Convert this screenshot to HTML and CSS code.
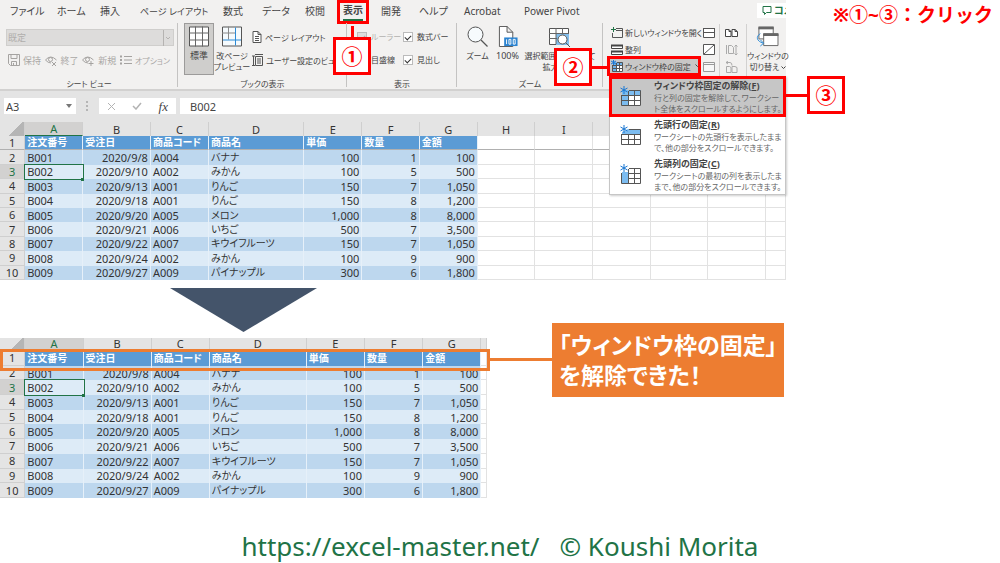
FILE: index.html
```html
<!DOCTYPE html>
<html lang="ja">
<head>
<meta charset="utf-8">
<title>ウィンドウ枠の固定を解除</title>
<link rel="stylesheet" href="styles.css">
</head>
<body>
<main class="slide">
  <div class="top">
    <section class="app">
      <nav class="tabs">
        <button class="tab">ファイル</button>
        <button class="tab">ホーム</button>
        <button class="tab">挿入</button>
        <button class="tab tab-long">ページ レイアウト</button>
        <button class="tab">数式</button>
        <button class="tab">データ</button>
        <button class="tab">校閲</button>
        <div class="tab-wrap">
          <button class="tab tab-active">表示</button>
          <span class="frame frame-tab"></span>
          <span class="badge badge-1">①</span>
        </div>
        <button class="tab">開発</button>
        <button class="tab">ヘルプ</button>
        <button class="tab">Acrobat</button>
        <button class="tab">Power Pivot</button>
        <button class="comment"><svg width="10" height="9" viewBox="0 0 10 9"><path d="M1 .5h8v6H4.500L2.500 8.500V6.500H1z" fill="none" stroke="#217346"/></svg>コメント</button>
      </nav>

      <div class="ribbon">
        <div class="group sheet-view">
          <div class="body">
            <div class="combo"><select aria-label="シート ビュー" disabled><option>既定</option></select>
              <svg class="combo-arrow" width="10" height="16" viewBox="0 0 10 16"><path d="M.5 0v16M3 7l2 2 2-2" fill="none" stroke="#b5b3b1"/></svg></div>
            <div class="sheet-actions">
              <button class="cmd" disabled><svg width="12" height="12" viewBox="0 0 12 12" fill="none" stroke="#a5a3a1"><path d="M.5.5h11v11H2.500L.5 9.500zM3 .5v4h6v-4M3.500 11.500v-4h5v4M5.500 9v2"/></svg>保持</button>
              <button class="cmd" disabled><svg width="13" height="11" viewBox="0 0 13 11" fill="none" stroke="#a5a3a1"><path d="M.5 5Q5.500-1 11.500 5M.5 5Q3 8 6 8M7 7l4 4M11 7l-4 4"/><circle cx="5.500" cy="4.500" r="2"/></svg>終了</button>
              <button class="cmd" disabled><svg width="13" height="11" viewBox="0 0 13 11" fill="none" stroke="#a5a3a1"><path d="M.5 5Q5.500-1 11.500 5M.5 5Q3 8 6 8M9 6v5M6.500 8.500h5"/><circle cx="5.500" cy="4.500" r="2"/></svg>新規</button>
              <button class="cmd cmd-kana" disabled><svg width="12" height="10" viewBox="0 0 12 10" fill="none" stroke="#a5a3a1"><path d="M0 1.500h2M0 5h2M0 8.500h2" stroke-width="2"/><path d="M4 1.500h8M4 5h8M4 8.500h8"/></svg>オプション</button>
            </div>
          </div>
          <div class="caption">シート ビュー</div>
        </div>

        <div class="group book-view">
          <div class="body">
            <button class="big big-on"><svg width="20" height="20" viewBox="0 0 20 20"><path d="M.5.5h19v19H.5z" fill="#fff" stroke="#555"/><path d="M6.500 0v20M13.500 0v20M0 6.500h20M0 13.500h20" stroke="#666"/></svg><span class="wide">標準</span></button>
            <button class="big"><svg width="20" height="20" viewBox="0 0 20 20"><path d="M.5.5h19v19H.5z" fill="#f5fafd" stroke="#555"/><path d="M6.500 0v13M0 6.500h13" stroke="#888"/><path d="M13.500 1v18M1 13.500h18" stroke="#2b8ad6"/></svg><span>改ページ<br>プレビュー</span></button>
            <div class="stack">
              <button class="cmd"><svg width="10" height="12" viewBox="0 0 10 12"><path d="M1 .5h5l3 3v8H1zM6 .5v3h3M3 5.500h4M3 7.500h4M3 9.500h4" fill="#fff" stroke="#555"/></svg>ページ レイアウト</button>
              <button class="cmd"><svg width="11" height="12" viewBox="0 0 11 12"><path d="M3.500 2.500h7v9h-7zM3 .5h8M1.500 2v10M0 2h3M0 11.500h3M5 5h4M5 7h4M5 9h4" fill="none" stroke="#555"/></svg>ユーザー設定のビュー</button>
            </div>
          </div>
          <div class="caption">ブックの表示</div>
        </div>

        <div class="group show">
          <div class="body checks">
            <label class="check off"><input type="checkbox" checked disabled>ルーラー</label>
            <label class="check"><input type="checkbox" checked>数式バー</label>
            <label class="check"><input type="checkbox" checked>目盛線</label>
            <label class="check"><input type="checkbox" checked>見出し</label>
          </div>
          <div class="caption">表示</div>
        </div>

        <div class="group zoom">
          <div class="body">
            <button class="big"><svg width="21" height="21" viewBox="0 0 21 21"><circle cx="8.500" cy="8.500" r="7.500" fill="#f7fbfd" stroke="#555"/><path d="M14 14l6.500 6.500" stroke="#555" stroke-width="1.300"/></svg><span>ズーム</span></button>
            <button class="big"><svg width="20" height="22" viewBox="0 0 20 22"><path d="M1 .5h8l6 6v15H1zM9 .5v6h6" fill="#fff" stroke="#555"/><path d="M6 12h14v9H6z" fill="#2b83d0"/><path d="M8.500 14v5M11 14h2v5h-2zM15.500 14h2v5h-2z" stroke="#fff" fill="none"/></svg><span class="wide">100%</span></button>
            <button class="big"><svg width="22" height="21" viewBox="0 0 22 21"><path d="M.5 2.500h19v16H.5z" fill="#fff" stroke="#555"/><path d="M7 7h13v12H7z" fill="#83beec"/><path d="M7 2v16M13.500 2v6M0 7.500h20M0 12.500h8" stroke="#666"/><circle cx="13.500" cy="13.500" r="4.500" fill="#fff" stroke="#555"/><path d="M17 17l4 4" stroke="#555"/></svg><span>選択範囲に合わせて<br>拡大/縮小</span></button>
          </div>
          <div class="caption">ズーム</div>
        </div>

        <div class="group window">
          <div class="body">
            <div class="win-list">
              <button class="cmd"><svg width="12" height="12" viewBox="0 0 12 12"><path d="M5 1.500h6.500v9H1.500V6M5 3.500h6.500" fill="none" stroke="#555"/><path d="M2.500 0v5M0 2.500h5" stroke="#217346"/></svg>新しいウィンドウを開く</button>
              <button class="cmd"><svg width="12" height="12" viewBox="0 0 12 12"><path d="M.5 1.500h11v3H.5zM.5 7.500h11v3H.5z" fill="#fff" stroke="#444"/><path d="M0 1.500h12M0 7.500h12" stroke="#444" stroke-width="2"/></svg>整列</button>
              <div class="freeze">
                <button class="cmd cmd-on"><svg width="12" height="12" viewBox="0 0 12 12"><path d="M2 2h10v10H2z" fill="#fff"/><path d="M2 2h10v3H5v7H2z" fill="#6fb3ea"/><path d="M1.500 5v6.500h10v-9H6M5.500 3v9M8.500 3v9M2 5.500h10M2 8.500h10" stroke="#555" fill="none"/><path d="M2.500 0v5M0 1l5 3M0 4l5-3" stroke="#1976d2"/></svg>ウィンドウ枠の固定<svg class="chev" width="5" height="4" viewBox="0 0 5 4"><path d="M.5.5l2 2 2-2" fill="none" stroke="#444"/></svg></button>
                <span class="frame"></span>
                <span class="badge badge-2">②</span>
                <div class="menu" role="menu">
                  <button class="item item-on" role="menuitem">
                    <svg width="22" height="22" viewBox="0 0 22 22"><path d="M2 4h19v16H2z" fill="#fff"/><path d="M2 4h19v5H8v11H2z" fill="#7cbcf0"/><path d="M1.500 9v10.500h19v-15H9M8.500 5v15M14.500 5v15M2 9.500h19M2 14.500h19" fill="none" stroke="#555"/><path d="M4 0v8M.5 2l7 4M.5 6l7-4" stroke="#1976d2"/></svg>
                    <span class="txt"><b>ウィンドウ枠固定の解除(<u>F</u>)</b><span>行と列の固定を解除して、ワークシー<br>ト全体をスクロールするようにします。</span></span>
                    <span class="frame"></span>
                    <span class="badge badge-3">③</span>
                  </button>
                  <button class="item" role="menuitem">
                    <svg width="22" height="22" viewBox="0 0 22 22"><path d="M2 4h19v16H2z" fill="#fff"/><path d="M8 4h13v5H2V7z" fill="#7cbcf0"/><path d="M1.500 9v10.500h19v-15H9M8.500 9v11M14.500 9v11M2 9.500h19M2 14.500h19" fill="none" stroke="#555"/><path d="M4 0v8M.5 2l7 4M.5 6l7-4" stroke="#1976d2"/></svg>
                    <span class="txt"><b>先頭行の固定(<u>R</u>)</b><span>ワークシートの先頭行を表示したまま<br>で、他の部分をスクロールできます。</span></span>
                  </button>
                  <button class="item" role="menuitem">
                    <svg width="22" height="22" viewBox="0 0 22 22"><path d="M2 4h19v16H2z" fill="#fff"/><path d="M2 8h6v12H2z" fill="#7cbcf0"/><path d="M1.500 9v10.500h19v-15H9M8.500 5v15M14.500 5v15M8 9.500h13M8 14.500h13" fill="none" stroke="#555"/><path d="M4 0v8M.5 2l7 4M.5 6l7-4" stroke="#1976d2"/></svg>
                    <span class="txt"><b>先頭列の固定(<u>C</u>)</b><span>ワークシートの最初の列を表示したま<br>まで、他の部分をスクロールできます。</span></span>
                  </button>
                </div>
              </div>
            </div>
            <div class="icons">
              <button class="ic" aria-label="分割"><svg width="12" height="12" viewBox="0 0 12 12"><path d="M.5 1.500h11v9H.5zM0 5.500h12" fill="#fff" stroke="#555"/><path d="M0 1.500h12" stroke="#555"/></svg></button>
              <button class="ic" aria-label="表示しない"><svg width="12" height="12" viewBox="0 0 12 12"><path d="M.5.5h11v10H.5zM1 10L11 1" fill="#fff" stroke="#555"/></svg></button>
              <button class="ic" aria-label="再表示"><svg width="12" height="12" viewBox="0 0 12 12"><path d="M.5 1.500h11v9H.5zM0 3.500h12" fill="#f7f7f7" stroke="#999"/></svg></button>
            </div>
            <div class="icons icons-2">
              <button class="ic" aria-label="並べて比較"><svg width="13" height="12" viewBox="0 0 13 12"><path d="M.5 2.500H4l2 2v5H.5zM7 2.500h3l2.500 2v5H7zM4 2.500v2h2M10 2.500v2h2" fill="#fff" stroke="#444"/></svg></button>
              <button class="ic" aria-label="同時にスクロール"><svg width="13" height="12" viewBox="0 0 13 12"><path d="M1.500 1v9M3.500 1.500h3l2 2v6h-5zM11 1v10M9.500 2.500L11 1l1.500 1.500M9.500 9.500L11 11l1.500-1.500" fill="none" stroke="#aaa"/></svg></button>
              <button class="ic" aria-label="位置を元に戻す"><svg width="13" height="12" viewBox="0 0 13 12"><path d="M1.500 5.500h3l1.500 1v5H1.500zM7 5.500h3l2 1v5H7zM1 1.500h4q2 0 2 3M3 0L1 1.500 3 3" fill="none" stroke="#aaa"/></svg></button>
            </div>
            <button class="big switch"><svg width="23" height="22" viewBox="0 0 23 22"><path d="M2.500 1.500h15v12h-15z" fill="#fff" stroke="#666"/><path d="M2 2h16" stroke="#666" stroke-width="3"/><path d="M7.500 8.500h15v12h-15z" fill="#fff" stroke="#666"/><path d="M7 9h16" stroke="#666" stroke-width="3"/><path d="M4 8C-1 11 0 16 7 18M4 14.500L7.500 18 4 21" fill="none" stroke="#2b8ad6"/></svg><span>ウィンドウの<br>切り替え <svg class="chev" width="5" height="4" viewBox="0 0 5 4"><path d="M.5.5l2 2 2-2" fill="none" stroke="#444"/></svg></span></button>
          </div>
        </div>
      </div>

      <div class="formula-bar">
        <div class="name-box"><input aria-label="名前ボックス" value="A3"><svg width="6" height="4" viewBox="0 0 6 4"><path d="M0 0h6L3 4z" fill="#777"/></svg></div>
        <svg class="dots" width="2" height="10" viewBox="0 0 2 10"><path d="M0 0h2v2H0zM0 4h2v2H0zM0 8h2v2H0z" fill="#b5b5b5"/></svg>
        <div class="fx">
          <svg width="9" height="9" viewBox="0 0 9 9"><path d="M1 1l7 7M8 1L1 8" stroke="#b3b3b3"/></svg>
          <svg width="10" height="8" viewBox="0 0 10 8"><path d="M1 4l3 3 5-6" fill="none" stroke="#b3b3b3" stroke-width="1.500"/></svg>
          <i>fx</i>
        </div>
        <input class="formula" aria-label="数式バー" value="B002">
      </div>

      <table class="sheet sheet-top">
        <colgroup><col class="c-n"><col class="c-a"><col class="c-b"><col class="c-c"><col class="c-d"><col class="c-a"><col class="c-f"><col class="c-a"><col class="c-f"><col class="c-a"><col class="c-f"><col class="c-f"><col class="c-a"><col></colgroup>
        <thead><tr><th class="corner"></th><th class="sel">A</th><th>B</th><th>C</th><th>D</th><th>E</th><th>F</th><th>G</th><th>H</th><th>I</th><th></th><th></th><th></th><th></th></tr></thead>
        <tbody>
        <tr class="head"><th>1</th><td>注文番号</td><td>受注日</td><td>商品コード</td><td>商品名</td><td>単価</td><td>数量</td><td>金額</td><td></td><td></td><td></td><td></td><td></td><td></td></tr>
        <tr><th>2</th><td>B001</td><td>2020/9/8</td><td>A004</td><td>バナナ</td><td>100</td><td>1</td><td>100</td><td></td><td></td><td></td><td></td><td></td><td></td></tr>
        <tr><th class="sel">3</th><td class="cur">B002</td><td>2020/9/10</td><td>A002</td><td>みかん</td><td>100</td><td>5</td><td>500</td><td></td><td></td><td></td><td></td><td></td><td></td></tr>
        <tr><th>4</th><td>B003</td><td>2020/9/13</td><td>A001</td><td>りんご</td><td>150</td><td>7</td><td>1,050</td><td></td><td></td><td></td><td></td><td></td><td></td></tr>
        <tr><th>5</th><td>B004</td><td>2020/9/18</td><td>A001</td><td>りんご</td><td>150</td><td>8</td><td>1,200</td><td></td><td></td><td></td><td></td><td></td><td></td></tr>
        <tr><th>6</th><td>B005</td><td>2020/9/20</td><td>A005</td><td>メロン</td><td>1,000</td><td>8</td><td>8,000</td><td></td><td></td><td></td><td></td><td></td><td></td></tr>
        <tr><th>7</th><td>B006</td><td>2020/9/21</td><td>A006</td><td>いちご</td><td>500</td><td>7</td><td>3,500</td><td></td><td></td><td></td><td></td><td></td><td></td></tr>
        <tr><th>8</th><td>B007</td><td>2020/9/22</td><td>A007</td><td>キウイフルーツ</td><td>150</td><td>7</td><td>1,050</td><td></td><td></td><td></td><td></td><td></td><td></td></tr>
        <tr><th>9</th><td>B008</td><td>2020/9/24</td><td>A002</td><td>みかん</td><td>100</td><td>9</td><td>900</td><td></td><td></td><td></td><td></td><td></td><td></td></tr>
        <tr><th>10</th><td>B009</td><td>2020/9/27</td><td>A009</td><td>パイナップル</td><td>300</td><td>6</td><td>1,800</td><td></td><td></td><td></td><td></td><td></td><td></td></tr>
        </tbody>
      </table>
    </section>
    <p class="note">※①~③：クリック</p>
  </div>

  <div class="arrow"></div>

  <div class="result">
    <div class="result-sheet">
      <table class="sheet sheet-bottom">
        <colgroup><col class="r-n"><col class="r-a"><col class="r-b"><col class="r-a"><col class="r-d"><col class="r-a"><col class="r-a"><col class="r-a"><col></colgroup>
        <thead><tr><th class="corner"></th><th class="sel">A</th><th>B</th><th>C</th><th>D</th><th>E</th><th>F</th><th>G</th><th></th></tr></thead>
        <tbody>
        <tr class="head"><th>1</th><td>注文番号</td><td>受注日</td><td>商品コード</td><td>商品名</td><td>単価</td><td>数量</td><td>金額</td><td></td></tr>
        <tr><th>2</th><td>B001</td><td>2020/9/8</td><td>A004</td><td>バナナ</td><td>100</td><td>1</td><td>100</td><td></td></tr>
        <tr><th class="sel">3</th><td class="cur">B002</td><td>2020/9/10</td><td>A002</td><td>みかん</td><td>100</td><td>5</td><td>500</td><td></td></tr>
        <tr><th>4</th><td>B003</td><td>2020/9/13</td><td>A001</td><td>りんご</td><td>150</td><td>7</td><td>1,050</td><td></td></tr>
        <tr><th>5</th><td>B004</td><td>2020/9/18</td><td>A001</td><td>りんご</td><td>150</td><td>8</td><td>1,200</td><td></td></tr>
        <tr><th>6</th><td>B005</td><td>2020/9/20</td><td>A005</td><td>メロン</td><td>1,000</td><td>8</td><td>8,000</td><td></td></tr>
        <tr><th>7</th><td>B006</td><td>2020/9/21</td><td>A006</td><td>いちご</td><td>500</td><td>7</td><td>3,500</td><td></td></tr>
        <tr><th>8</th><td>B007</td><td>2020/9/22</td><td>A007</td><td>キウイフルーツ</td><td>150</td><td>7</td><td>1,050</td><td></td></tr>
        <tr><th>9</th><td>B008</td><td>2020/9/24</td><td>A002</td><td>みかん</td><td>100</td><td>9</td><td>900</td><td></td></tr>
        <tr><th>10</th><td>B009</td><td>2020/9/27</td><td>A009</td><td>パイナップル</td><td>300</td><td>6</td><td>1,800</td><td></td></tr>
        </tbody>
      </table>
      <span class="row-frame"></span>
    </div>
    <div class="link-line"></div>
    <p class="callout">「ウィンドウ枠の固定」<br>を解除できた！</p>
  </div>

  <footer class="credit"><a href="https://excel-master.net/">https://excel-master.net/</a><span>© Koushi Morita</span></footer>
</main>
</body>
</html>
```
FILE: styles.css
```css
* { box-sizing: border-box; }
body {
  margin: 0;
  background: #fff;
  color: #444;
  font-family: "Noto Sans", "Noto Sans CJK JP", sans-serif;
  font-size: 9px;
  line-height: 11px;
  font-feature-settings: "palt";
}
button, input, select {
  margin: 0;
  padding: 0;
  border: 0;
  background: none;
  color: inherit;
  font: inherit;
  font-feature-settings: inherit;
  white-space: nowrap;
}
svg { display: block; flex: none; }
p { margin: 0; }

.top { display: flex; align-items: flex-start; }
.app { width: 78.6%; }
.note {
  flex: 1;
  padding: 3px 7px 0 0;
  text-align: right;
  color: #f00;
  font-size: 19px;
  line-height: 24px;
  font-weight: 700;
  font-feature-settings: normal;
  white-space: nowrap;
}

/* Tabs */
.tabs {
  display: grid;
  grid-template-columns: 47fr 43fr 40fr 83fr 39fr 43fr 38fr 38fr 38fr 45fr 60fr 233fr 29fr;
  align-items: center;
  height: 22px;
  padding-left: 10px;
  background: #f2f1f0;
  font-size: 10px;
}
.tab { display: block; justify-self: start; height: 20px; }
.tab-long { font-size: 9px; }
.tab-wrap { position: relative; justify-self: start; }
.tab-active { font-weight: 700; border-bottom: 2px solid #217346; }
.comment {
  display: flex;
  align-items: center;
  gap: 2px;
  height: 15px;
  margin-bottom: 2px;
  padding-left: 5px;
  overflow: hidden;
  background: #fff;
  color: #217346;
  font-weight: 700;
}

/* Annotations */
.frame { position: absolute; inset: 0; border: 3px solid #f00; }
.frame-tab { inset: -1px -6px -3px; }
.badge {
  position: absolute;
  z-index: 3;
  display: flex;
  align-items: center;
  justify-content: center;
  width: 38px;
  height: 38px;
  border: 3px solid #f00;
  background: #fff;
  color: #f00;
  font-size: 21px;
  line-height: 24px;
  font-weight: 700;
}
.badge::before { content: ""; position: absolute; background: #f00; }
.badge-1 { left: -10px; top: 36px; }
.badge-1::before { width: 3px; height: 14px; bottom: 100%; }
.badge-2 { right: calc(100% + 15px); top: -8px; }
.badge-2::before { width: 18px; height: 3px; left: 100%; }
.badge-3 { left: calc(100% + 22px); top: -1px; }
.badge-3::before { width: 25px; height: 3px; right: 100%; }

/* Ribbon */
.ribbon {
  display: grid;
  grid-template-columns: 178fr 169fr 110fr 146fr 183fr;
  height: 69px;
  background: #f2f1f0;
  border-bottom: 2px solid #d2d1d0;
  font-size: 8px;
}
.group { position: relative; display: flex; flex-direction: column; min-width: 0; padding-top: 1px; }
.group + .group::before {
  content: "";
  position: absolute;
  left: -1px;
  top: 1px;
  bottom: 2px;
  width: 1px;
  background: #c4c3c2;
}
.body { display: flex; flex: 1; }
.caption { text-align: center; }
.cmd { display: flex; align-items: center; gap: 3px; }
.cmd:disabled { color: #aaa8a6; }
.big {
  display: flex;
  flex: none;
  flex-direction: column;
  align-items: center;
  justify-content: flex-start;
  gap: 3px;
  padding-top: 3px;
  text-align: center;
}
.big > svg { height: 21px; }
.big .chev { display: inline-block; vertical-align: middle; }
.wide { font-size: 9px; }

.sheet-view .body { flex-direction: column; padding: 6px 4px 0 6px; gap: 8px; }
.combo { position: relative; height: 17px; border: 1px solid #cfcecc; background: #dddcdb; font-size: 9px; }
.combo select { display: block; width: 100%; height: 100%; padding-left: 1px; appearance: none; color: #b0aeac; opacity: 1; }
.combo-arrow { position: absolute; right: 0; top: 0; }
.sheet-actions { display: flex; justify-content: space-between; padding: 0 4px 0 2px; font-size: 9px; }
.cmd-kana { font-size: 8px; }

.book-view .body { padding-left: 6px; }
.book-view .big { width: 36px; }
.book-view .big-on { width: 30px; height: 52px; background: #cfcecc; border: 1px solid #9c9b9a; padding-top: 2px; }
.stack { display: flex; flex-direction: column; gap: 11px; padding: 8px 0 0 2px; }

.checks {
  display: grid;
  grid-template-columns: 46fr 54fr;
  grid-auto-rows: 23px;
  padding: 2px 0 0 10px;
}
.check { display: flex; align-items: center; gap: 4px; white-space: nowrap; }
.check.off { color: #b3b1af; }
.check input {
  appearance: none;
  width: 10px;
  height: 10px;
  border: 1px solid #bbb;
  background: #fff;
  display: grid;
  place-items: center;
}
.check input::before {
  content: "";
  width: 5px;
  height: 3px;
  border: solid #333;
  border-width: 0 0 1px 1px;
  transform: rotate(-45deg);
}
.check.off input { background: #ddd; border-color: #bbb; }
.check.off input::before { border-color: #aaa; }

.zoom .body { padding-left: 8px; gap: 5px; }
.zoom .big { width: 25px; }
.zoom .big:last-child { width: 70px; }

.window .body { padding: 0 0 0 4px; }
.win-list { display: flex; flex: none; flex-direction: column; width: 94px; padding-top: 1px; }
.win-list .cmd { height: 17px; padding-left: 4px; gap: 2px; }
.freeze { position: relative; margin-top: -2px; }
.win-list .cmd-on { width: 94px; height: 20px; background: #c8c7c6; }
.cmd-on .chev { margin-left: 2px; }
.icons { display: flex; flex: none; flex-direction: column; width: 18px; padding: 1px 0 0 2px; }
.icons-2 { width: 28px; margin: 1px 0 0; height: 52px; padding: 0 0 0 5px; border: solid #d2d1d0; border-width: 0 1px; }
.ic { display: flex; flex: none; align-items: center; height: 17px; }
.switch { flex: 1; }

/* Freeze panes menu */
.menu {
  position: absolute;
  z-index: 2;
  left: 2px;
  top: 100%;
  width: 177px;
  border: 1px solid #c6c6c6;
  background: #fff;
  box-shadow: 1px 1px 2px #0003;
}
.item {
  position: relative;
  display: flex;
  align-items: center;
  gap: 12px;
  width: 100%;
  height: 39px;
  padding-left: 10px;
  text-align: left;
}
.item-on { background: #c6c6c6; }
.item .frame { inset: -1px; }
.txt { display: block; color: #666; }
.txt b { display: block; color: #444; font-size: 9px; line-height: 13px; }
.txt span { display: block; }

/* Formula bar */
.formula-bar {
  display: flex;
  align-items: center;
  height: 31px;
  padding: 0 0 1px 4px;
  background: #e4e4e4;
  font-size: 11px;
}
.name-box { display: flex; align-items: center; width: 72px; height: 16px; padding: 0 4px 0 2px; background: #fff; }
.name-box input { flex: 1; min-width: 0; }
.dots { margin: 0 11px 0 10px; }
.fx { display: flex; align-items: center; justify-content: space-between; width: 77px; height: 16px; padding: 0 8px; background: #fff; }
.fx i { font-family: "Liberation Serif", serif; font-size: 13px; }
.formula { flex: 1; height: 16px; margin-left: 4px; padding-left: 10px; background: #fff; }

/* Worksheets */
.sheet {
  width: 100%;
  table-layout: fixed;
  border-collapse: separate;
  border-spacing: 0;
  color: #333;
  font-size: 11px;
  line-height: 13px;
}
.sheet-top { height: 158px; }
.sheet-bottom { height: 160px; }
.c-n { width: 3.2%; } .c-a { width: 7.4%; } .c-b { width: 8.6%; } .c-c { width: 7.4%; }
.c-d { width: 12.1%; } .c-f { width: 7.3%; }
.r-n { width: 5.2%; } .r-a { width: 11.95%; } .r-b { width: 14%; } .r-d { width: 19.9%; }
.sheet th, .sheet td { padding: 0 2px; white-space: nowrap; }
.sheet th { background: #e4e4e4; font-weight: 400; border: solid #cfcfcf; border-width: 0 1px 0 0; }
.sheet tbody th { border-width: 0 1px 1px 0; }
.sheet th.sel { background: #d2d1d0; color: #217346; }
.sheet thead th.sel { border-bottom: 1px solid #217346; }
.sheet-bottom thead th { line-height: 12px; vertical-align: top; }
.sheet .corner { background: linear-gradient(135deg, #e4e4e4 60%, #b5b5b5 60%); }
.sheet td { border: solid #e2e2e2; border-width: 0 1px 1px 0; }
.sheet td:nth-child(-n+8) { border: solid #e6f0f9; border-width: 0 1px 0 0; background: #ddebf7; }
.sheet tr:nth-child(even) td:nth-child(-n+8) { background: #bdd7ee; }
.sheet .head td:nth-child(-n+8) { background: #5b9bd5; color: #fff; font-weight: 700; font-size: 10px; }
.sheet td:nth-child(5) { font-size: 10px; }
.sheet tr:not(.head) td:nth-child(3),
.sheet tr:not(.head) td:nth-child(n+6) { text-align: right; }
.sheet-top .head td, .sheet-top .head th { border-bottom: 1px solid #b0b0b0; }
.sheet td.cur { outline: 1px solid #217346; position: relative; }
.cur::after {
  content: "";
  position: absolute;
  right: -2px;
  bottom: -2px;
  width: 3px;
  height: 3px;
  background: #217346;
}

.arrow {
  width: 14.7%;
  height: 44px;
  margin: 8px 0 6px 17%;
  background: #44546a;
  clip-path: polygon(0 0, 100% 0, 50% 100%);
}

/* Result */
.result { display: flex; align-items: flex-start; }
.result-sheet { position: relative; width: 48.7%; }
.row-frame { position: absolute; left: 0; right: -3px; top: 11px; height: 22px; border: 3px solid #ed7d31; }
.link-line { width: 6.2%; height: 3px; margin: 20px 0 0 3px; background: #ed7d31; }
.callout {
  margin-top: -15px;
  padding: 7px;
  background: #ed7d31;
  color: #fff;
  font-size: 23px;
  line-height: 30px;
  font-weight: 700;
  white-space: nowrap;
}

.credit {
  display: flex;
  justify-content: center;
  gap: 20px;
  margin-top: 31px;
  color: #217346;
  font-size: 26px;
  line-height: 34px;
}
.credit a { color: inherit; text-decoration: none; }
```
